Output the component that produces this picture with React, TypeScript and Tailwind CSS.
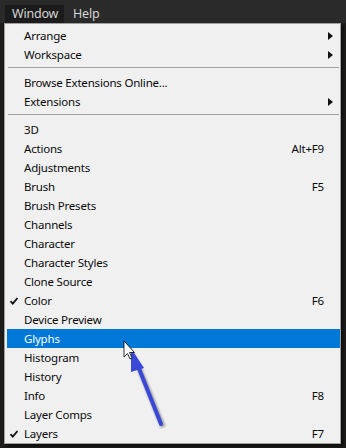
import React from 'react'

type Entry =
  | { kind: 'item'; label: string; shortcut?: string; submenu?: boolean; checked?: boolean; active?: boolean }
  | { kind: 'sep' }

const entries: Entry[] = [
  { kind: 'item', label: 'Arrange', submenu: true },
  { kind: 'item', label: 'Workspace', submenu: true },
  { kind: 'sep' },
  { kind: 'item', label: 'Browse Extensions Online...' },
  { kind: 'item', label: 'Extensions', submenu: true },
  { kind: 'sep' },
  { kind: 'item', label: '3D' },
  { kind: 'item', label: 'Actions', shortcut: 'Alt+F9' },
  { kind: 'item', label: 'Adjustments' },
  { kind: 'item', label: 'Brush', shortcut: 'F5' },
  { kind: 'item', label: 'Brush Presets' },
  { kind: 'item', label: 'Channels' },
  { kind: 'item', label: 'Character' },
  { kind: 'item', label: 'Character Styles' },
  { kind: 'item', label: 'Clone Source' },
  { kind: 'item', label: 'Color', shortcut: 'F6', checked: true },
  { kind: 'item', label: 'Device Preview' },
  { kind: 'item', label: 'Glyphs', active: true },
  { kind: 'item', label: 'Histogram' },
  { kind: 'item', label: 'History' },
  { kind: 'item', label: 'Info', shortcut: 'F8' },
  { kind: 'item', label: 'Layer Comps' },
  { kind: 'item', label: 'Layers', shortcut: 'F7', checked: true },
]

function Check() {
  return (
    <svg width="8" height="8" viewBox="0 0 8 8" className="absolute left-[3px] top-[6px]">
      <path d="M0.5 4.2 L2.8 6.6 L7.5 1" fill="none" stroke="#111" strokeWidth="1.8" />
    </svg>
  )
}

export default function App() {
  return (
    <div
      className="relative w-[346px] h-[448px] overflow-hidden bg-[#1d1c1b]"
      style={{ fontFamily: '"Noto Sans", "Open Sans", sans-serif' }}
    >
      {/* Menu bar */}
      <div className="h-[23px] bg-[#2a2a2a] flex items-end pl-[5px] text-[12.5px] tracking-[-0.2px] text-[#d6d6d6]">
        <div className="h-[18px] w-[59px] bg-[#1b1b1b] flex items-center pl-[7px] leading-none">Window</div>
        <div className="h-[18px] flex items-center pl-[9px] leading-none">Help</div>
      </div>

      {/* Dropdown */}
      <div className="ml-[4px] w-[337px] bg-[#f0f0f0] border border-[#a0a0a0] pt-[2px] text-[11.5px] tracking-[-0.2px] text-[#0a0a0a] shadow-[2px_2px_3px_rgba(0,0,0,0.6)]">
        {entries.map((e, i) =>
          e.kind === 'sep' ? (
            <div key={i} className="pt-[3px] pb-[5px] pl-[3px] pr-[1px]">
              <div className="h-px bg-[#a0a0a0]" />
            </div>
          ) : (
            <div
              key={i}
              className={`relative h-[19px] ml-[2px] flex items-center pl-[17px] pr-[16px] ${
                e.active ? 'bg-[#0078d7] text-white' : ''
              }`}
            >
              {e.checked && <Check />}
              <span className="leading-none">{e.label}</span>
              {e.shortcut && <span className="ml-auto leading-none">{e.shortcut}</span>}
              {e.submenu && (
                <svg width="5" height="8" viewBox="0 0 5 8" className="absolute right-[7px] top-[6px]">
                  <path d="M0 0 L5 4 L0 8 Z" fill="#111" />
                </svg>
              )}
            </div>
          )
        )}
      </div>

      {/* Annotation arrow and cursor */}
      <svg width="346" height="448" className="absolute left-0 top-0 pointer-events-none">
        <defs>
          <filter id="sh" x="-20%" y="-20%" width="140%" height="140%">
            <feGaussianBlur stdDeviation="1.2" />
          </filter>
        </defs>
        <g opacity="0.35" filter="url(#sh)">
          <line x1="163" y1="427" x2="138" y2="365" stroke="#000" strokeWidth="5" />
        </g>
        <line x1="161" y1="424" x2="138" y2="366" stroke="#3a48d8" strokeWidth="4" strokeLinecap="round" />
        <path d="M131 348 L144 368 L131 372 Z" fill="#3a48d8" />
        <path
          d="M124 341 L124 357 L127.5 353.5 L130 359 L132 358 L129.5 352.5 L134.5 352.5 Z"
          fill="#fff"
          stroke="#000"
          strokeWidth="0.8"
        />
      </svg>
    </div>
  )
}
